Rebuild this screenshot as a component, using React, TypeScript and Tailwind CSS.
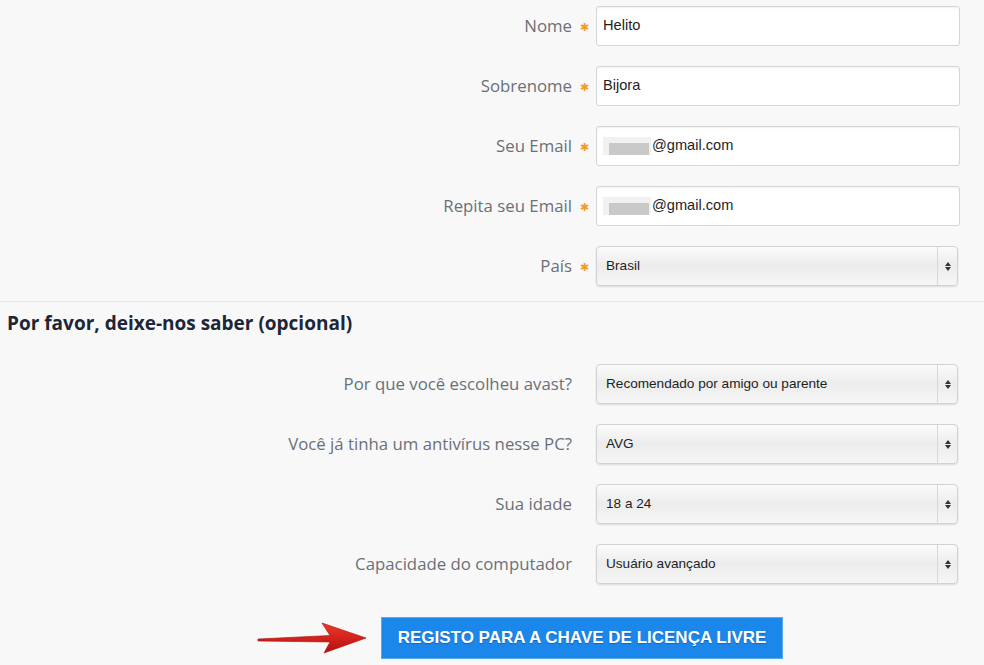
import React from 'react';

const label = 'font-["Open_Sans",sans-serif] text-[16.8px] text-[#6a7078]';
const field = 'font-["Liberation_Sans",Arial,sans-serif] text-[#1e1e1e]';

function Star() {
  return (
    <span className="w-[24px] flex justify-center text-[#f39a2c] text-[11px] leading-none">✱</span>
  );
}

function TextRow({ name, children }: { name: string; children: React.ReactNode }) {
  return (
    <div className="flex items-center h-[40px]">
      <div className={`w-[572px] text-right ${label}`}>{name}</div>
      <Star />
      <div className={`w-[364px] h-[40px] bg-white border border-[#d6d6d6] rounded-[3px] shadow-[inset_0_1px_2px_rgba(0,0,0,0.06)] flex items-center px-[6px] text-[14.6px] ${field}`}>
        {children}
      </div>
    </div>
  );
}

function SelectRow({ name, value, star }: { name: string; value: string; star?: boolean }) {
  return (
    <div className="flex items-center h-[40px]">
      <div className={`w-[572px] text-right ${label}`}>{name}</div>
      {star ? <Star /> : <span className="w-[24px]" />}
      <div className={`w-[362px] h-[40px] rounded-[4px] border border-[#d2d2d2] bg-gradient-to-b from-[#fbfbfb] via-[#ececec] to-[#f6f6f6] shadow-[0_1px_2px_rgba(0,0,0,0.12)] flex items-center text-[13.6px] ${field}`}>
        <span className="flex-1 pl-[9px]">{value}</span>
        <span className="w-[20px] h-full border-l border-[#d8d8d8] flex flex-col items-center justify-center gap-[1px]">
          <svg width="6" height="4" viewBox="0 0 6 4"><path d="M0 4 L3 0 L6 4 Z" fill="#333" /></svg>
          <svg width="6" height="4" viewBox="0 0 6 4"><path d="M0 0 L3 4 L6 0 Z" fill="#333" /></svg>
        </span>
      </div>
    </div>
  );
}

function Blurred() {
  return (
    <span className="relative inline-block w-[48px] h-[18px] mr-[1px]">
      <span className="absolute left-0 top-0 w-[48px] h-[18px] bg-[#f1f1f1]" />
      <span className="absolute left-[6px] top-[6px] w-[40px] h-[12px] bg-[#c9c9c9]" />
    </span>
  );
}

export default function App() {
  return (
    <div className="w-[984px] h-[665px] bg-[#f8f8f8] overflow-hidden">
      <div className="pt-[6px] flex flex-col gap-[20px]">
        <TextRow name="Nome">Helito</TextRow>
        <TextRow name="Sobrenome">Bijora</TextRow>
        <TextRow name="Seu Email"><Blurred />@gmail.com</TextRow>
        <TextRow name="Repita seu Email"><Blurred />@gmail.com</TextRow>
        <SelectRow name="País" value="Brasil" star />
      </div>

      <div className="mt-[15px] border-t border-[#e8e8e8]" />

      <h2 className='pl-[7px] pt-[9px] font-["Open_Sans",sans-serif] font-bold text-[19px] text-[#1d2636] leading-[24px]'>
        Por favor, deixe-nos saber (opcional)
      </h2>

      <div className="mt-[29px] flex flex-col gap-[20px]">
        <SelectRow name="Por que você escolheu avast?" value="Recomendado por amigo ou parente" />
        <SelectRow name="Você já tinha um antivírus nesse PC?" value="AVG" />
        <SelectRow name="Sua idade" value="18 a 24" />
        <SelectRow name="Capacidade do computador" value="Usuário avançado" />
      </div>

      <div className="mt-[33px] pl-[256px] flex items-center">
        <svg width="112" height="34" viewBox="0 0 112 34" className="mr-[13px]">
          <defs>
            <linearGradient id="arr" x1="0" y1="0" x2="0" y2="1">
              <stop offset="0" stopColor="#f03a2a" />
              <stop offset="1" stopColor="#b50d0d" />
            </linearGradient>
          </defs>
          <path d="M2 18 L74 14.5 L66 2 L110 17 L68 32 L74 21 L2 20 Z" fill="url(#arr)" stroke="#a10b0b" strokeWidth="0.6" />
        </svg>
        <button className='w-[402px] h-[42px] bg-[#1b87ea] border border-[#5aaaf0] text-white font-["Liberation_Sans",Arial,sans-serif] font-bold text-[17px] [text-shadow:0_1px_1px_rgba(0,40,100,0.35)]'>
          REGISTO PARA A CHAVE DE LICENÇA LIVRE
        </button>
      </div>
    </div>
  );
}
